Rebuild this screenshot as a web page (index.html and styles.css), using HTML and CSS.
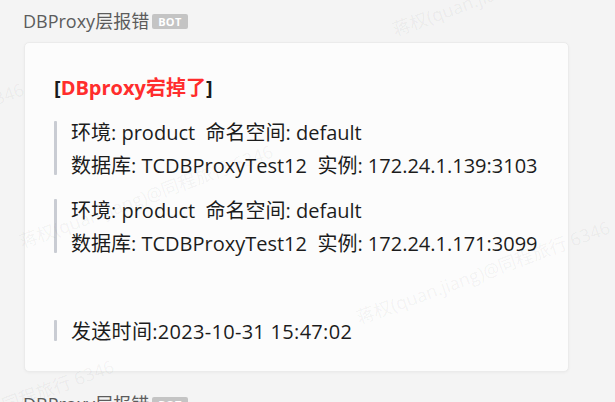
FILE: index.html
```html
<!DOCTYPE html>
<html lang="zh">
<head>
<meta charset="utf-8">
<link rel="stylesheet" href="styles.css">
</head>
<body>
<div class="feed">
  <div class="msg">
    <div class="sender"><span class="name">DBProxy层报错</span><span class="badge">BOT</span></div>
    <div class="card">
      <div class="title">[<span class="alert">DBproxy宕掉了</span>]</div>
      <div class="quote">
        <div class="bar"></div>
        <div class="lines">
          <div class="line">环境: product&nbsp;&nbsp;命名空间: default</div>
          <div class="line">数据库: TCDBProxyTest12&nbsp;&nbsp;实例: 172.24.1.139:3103</div>
        </div>
      </div>
      <div class="quote">
        <div class="bar"></div>
        <div class="lines">
          <div class="line">环境: product&nbsp;&nbsp;命名空间: default</div>
          <div class="line">数据库: TCDBProxyTest12&nbsp;&nbsp;实例: 172.24.1.171:3099</div>
        </div>
      </div>
      <div class="quote time">
        <div class="bar"></div>
        <div class="lines">
          <div class="line sent">发送时间:2023-10-31 15:47:02</div>
        </div>
      </div>
    </div>
  </div>
  <div class="msg">
    <div class="sender"><span class="name">DBProxy层报错</span><span class="badge">BOT</span></div>
  </div>
</div>
<div class="watermarks">
  <span class="wm w1">蒋权(quan.jiang)@同程旅行 6346</span>
  <span class="wm w2">蒋权(quan.jiang)@同程旅行 6346</span>
  <span class="wm w3">蒋权(quan.jiang)@同程旅行 6346</span>
  <span class="wm w4">蒋权(quan.jiang)@同程旅行 6346</span>
  <span class="wm w5">蒋权(quan.jiang)@同程旅行 6346</span>
</div>
</body>
</html>
```

FILE: styles.css
```css
html, body {
  margin: 0;
  padding: 0;
}
body {
  background: #f4f4f4;
  width: 615px;
  height: 402px;
  overflow: hidden;
  position: relative;
  font-family: "Open Sans", "Noto Sans CJK SC", sans-serif;
}
.feed {
  display: flex;
  flex-direction: column;
  gap: 20px;
  padding-left: 23px;
  padding-top: 9px;
}
.sender {
  display: flex;
  align-items: center;
  height: 24px;
  gap: 3px;
}
.name {
  font-size: 18px;
  color: #5c5c5c;
  line-height: 24px;
}
.badge {
  background: #c4c4c4;
  color: #fff;
  font-size: 11px;
  font-weight: 700;
  line-height: 15px;
  height: 15px;
  padding: 0 6px;
  border-radius: 2px;
  letter-spacing: 0.3px;
}
.card {
  margin-top: 9px;
  margin-left: 1px;
  width: 545px;
  height: 330px;
  box-sizing: border-box;
  background: #fcfcfc;
  border: 1px solid #ebebeb;
  border-radius: 5px;
  box-shadow: 0 1px 3px rgba(0, 0, 0, 0.04);
  padding: 33px 0 0 29px;
  display: flex;
  flex-direction: column;
}
.title {
  font-size: 20px;
  font-weight: 700;
  line-height: 24px;
  color: #1a1a1a;
  margin-bottom: 16px;
}
.alert {
  color: #ff2d2d;
}
.quote {
  display: flex;
  gap: 14px;
  margin-bottom: 12px;
}
.quote.time {
  margin-top: 43px;
}
.bar {
  width: 3px;
  flex: none;
  background: #c9ccd3;
  margin: 5px 0 7px;
  border-radius: 1px;
}
.lines {
  display: flex;
  flex-direction: column;
}
.line {
  font-size: 20px;
  line-height: 33px;
  color: #1c1c1c;
  white-space: nowrap;
}
.line.sent {
  letter-spacing: 0.3px;
}
.watermarks {
  position: absolute;
  inset: 0;
  pointer-events: none;
  overflow: hidden;
}
.wm {
  position: absolute;
  white-space: nowrap;
  font-size: 18px;
  line-height: 20px;
  color: rgba(0, 0, 0, 0.05);
  transform-origin: left center;
  transform: rotate(-20deg);
}
.w1 { left: 393px; top: 20px; }
.w2 { left: -229px; top: 170px; }
.w3 { left: 20px; top: 232px; }
.w4 { left: 357px; top: 308px; }
.w5 { left: -139px; top: 447px; }
```
